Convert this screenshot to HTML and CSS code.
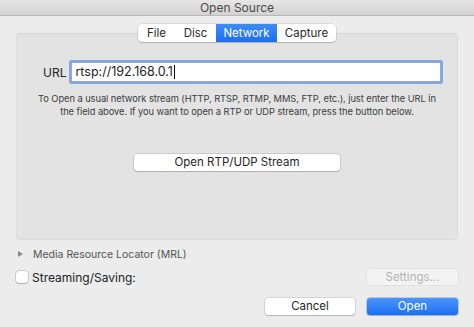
FILE: index.html
```html
<!DOCTYPE html>
<html>
<head>
<meta charset="utf-8">
<link rel="stylesheet" href="styles.css">
</head>
<body>
<div class="window">
  <div class="titlebar">Open Source</div>
  <div class="content">
    <div class="tabs">
      <span class="tab">File</span>
      <span class="tab">Disc</span>
      <span class="tab active">Network</span>
      <span class="tab">Capture</span>
    </div>
    <div class="panel">
      <div class="url-row">
        <span class="url-label">URL</span>
        <div class="url-input">rtsp://192.168.0.1<span class="caret"></span></div>
      </div>
      <p class="desc">To Open a usual network stream (HTTP, RTSP, RTMP, MMS, FTP, etc.), just enter the URL in<br>the field above. If you want to open a RTP or UDP stream, press the button below.</p>
      <div class="rtp-row"><button class="btn rtp">Open RTP/UDP Stream</button></div>
    </div>
    <div class="mrl"><span class="tri"></span><span>Media Resource Locator (MRL)</span></div>
    <div class="stream-row">
      <label class="check"><span class="box"></span><span>Streaming/Saving:</span></label>
      <button class="btn disabled">Settings...</button>
    </div>
    <div class="actions">
      <button class="btn cancel">Cancel</button>
      <button class="btn primary">Open</button>
    </div>
  </div>
</div>
</body>
</html>
```
FILE: styles.css
```css
* { box-sizing: border-box; }
html, body { margin: 0; padding: 0; }
body {
  width: 474px;
  height: 327px;
  overflow: hidden;
  background: #ececec;
  font-family: "Inter", "Liberation Sans", sans-serif;
  color: #262626;
}
.window { width: 474px; height: 327px; }
.titlebar {
  height: 16px;
  background: linear-gradient(#e6e6e6, #d2d2d2);
  border-bottom: 1px solid #b8b8b8;
  text-align: center;
  font-size: 12px;
  line-height: 15px;
  color: #4a4a4a;
}
.content { padding: 8px 16px 0 16px; }
.tabs {
  display: flex;
  width: 198px;
  height: 18px;
  margin: 0 auto -9px auto;
  position: relative;
  z-index: 1;
  background: #fff;
  border-radius: 4px;
  box-shadow: 0 0 0 0.5px rgba(0,0,0,0.15), 0 1px 1px rgba(0,0,0,0.15);
  font-size: 11.5px;
  line-height: 18px;
}
.tab { text-align: center; color: #2a2a2a; }
.tab:nth-child(1) { width: 37px; }
.tab:nth-child(2) { width: 41px; }
.tab:nth-child(3) { width: 61px; }
.tab:nth-child(4) { width: 59px; }
.tab.active {
  background: linear-gradient(#3f8cf6, #1c6ef0);
  color: #fff;
}
.panel {
  height: 207px;
  background: #e3e3e3;
  border: 1px solid #dcdcdc;
  border-top-color: #d6d6d6;
  border-radius: 4px;
  padding: 28px 16px 0 26px;
}
.url-row { display: flex; align-items: center; gap: 5px; }
.url-label { font-size: 12px; color: #262626; }
.url-input {
  flex: 1;
  height: 20px;
  background: #fff;
  border: 1px solid #9ab;
  box-shadow: 0 0 0 2px #7fa8e6;
  border-radius: 1px;
  font-size: 12.5px;
  line-height: 18px;
  padding-left: 3px;
  color: #1e1e1e;
  display: flex;
  align-items: center;
}
.caret { display: inline-block; width: 1px; height: 14px; background: #000; margin-left: 1px; }
.desc {
  margin: 10px -16px 0 -26px;
  text-align: center;
  white-space: nowrap;
  font-size: 9.3px;
  letter-spacing: -0.05px;
  line-height: 13px;
  color: #3c3c3c;
}
.rtp-row { display: flex; justify-content: center; margin-top: 36px; margin-left: -10px; }
.btn {
  font-family: inherit;
  font-size: 11.5px;
  height: 17px;
  padding: 0;
  background: #fff;
  border: none;
  border-radius: 3px;
  box-shadow: 0 0 0 0.5px rgba(0,0,0,0.2), 0 1px 1px rgba(0,0,0,0.15);
  color: #262626;
  line-height: 17px;
}
.rtp { width: 206px; }
.mrl {
  display: flex;
  align-items: center;
  margin-top: 8px;
  height: 12px;
  font-size: 10.5px;
  color: #555;
}
.tri {
  width: 0; height: 0;
  border-left: 5px solid #8a8a8a;
  border-top: 3.5px solid transparent;
  border-bottom: 3.5px solid transparent;
  margin: 0 10px 0 2px;
}
.stream-row {
  display: flex;
  justify-content: space-between;
  align-items: center;
  margin-top: 9px;
  height: 16px;
}
.check { display: flex; align-items: center; gap: 4px; font-size: 12px; color: #222; }
.box {
  width: 12px; height: 12px;
  background: #fff;
  border-radius: 3px;
  box-shadow: 0 0 0 0.5px rgba(0,0,0,0.25), 0 0.5px 1px rgba(0,0,0,0.15);
}
.btn.disabled {
  width: 91px;
  height: 16px;
  background: #f3f3f3;
  color: #b4b4b4;
  box-shadow: 0 0 0 0.5px rgba(0,0,0,0.08);
}
.actions {
  display: flex;
  justify-content: flex-end;
  gap: 12px;
  margin-top: 13px;
}
.cancel { width: 90px; }
.primary {
  width: 91px;
  background: linear-gradient(#4a95f8, #1d6ff2);
  color: #fff;
  box-shadow: 0 0 0 0.5px rgba(0,60,180,0.4), 0 1px 1px rgba(0,0,0,0.15);
}
```
